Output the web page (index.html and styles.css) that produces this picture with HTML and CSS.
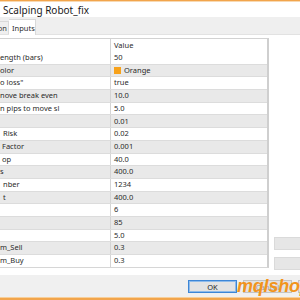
FILE: index.html
```html
<!DOCTYPE html>
<html>
<head>
<meta charset="utf-8">
<link rel="stylesheet" href="styles.css">
</head>
<body>
<div class="window">
  <div class="topline"></div>
  <div class="titlebar"><span class="title">Scalping Robot_fix</span></div>
  <div class="tabs">
    <div class="tab partial">on</div>
    <div class="tab active">Inputs</div>
  </div>
  <div class="page">
    <div class="grid">
      <div class="row head"><div class="c1"></div><div class="c2">Value</div></div>
      <div class="row"><div class="c1">ength (bars)</div><div class="c2">50</div></div>
      <div class="row"><div class="c1">olor</div><div class="c2"><span class="swatch"></span>Orange</div></div>
      <div class="row"><div class="c1">o loss"</div><div class="c2">true</div></div>
      <div class="row"><div class="c1">nove break even</div><div class="c2">10.0</div></div>
      <div class="row"><div class="c1">n pips to move sl</div><div class="c2">5.0</div></div>
      <div class="row"><div class="c1"></div><div class="c2">0.01</div></div>
      <div class="row"><div class="c1 ind">Risk</div><div class="c2">0.02</div></div>
      <div class="row"><div class="c1 ind1">Factor</div><div class="c2">0.001</div></div>
      <div class="row"><div class="c1 ind1">op</div><div class="c2">40.0</div></div>
      <div class="row"><div class="c1">s</div><div class="c2">400.0</div></div>
      <div class="row"><div class="c1 ind">nber</div><div class="c2">1234</div></div>
      <div class="row"><div class="c1 ind">t</div><div class="c2">400.0</div></div>
      <div class="row"><div class="c1"></div><div class="c2">6</div></div>
      <div class="row"><div class="c1"></div><div class="c2">85</div></div>
      <div class="row"><div class="c1"></div><div class="c2">5.0</div></div>
      <div class="row"><div class="c1">m_Sell</div><div class="c2">0.3</div></div>
      <div class="row"><div class="c1">m_Buy</div><div class="c2">0.3</div></div>
    </div>
    <div class="side">
      <div class="sbtn"></div>
      <div class="sbtn"></div>
    </div>
  </div>
  <div class="footer">
    <div class="btn ok">OK</div>
    <div class="btn cancel">Cancel</div>
    <div class="btn"></div>
    <div class="watermark">mqlshop</div>
  </div>
  <div class="bottomline"></div>
</div>
</body>
</html>
```

FILE: styles.css
```css
* { box-sizing: border-box; }
html, body { margin: 0; padding: 0; }
body {
  width: 300px;
  height: 300px;
  overflow: hidden;
  background: #fff;
  font-family: "Noto Sans", "Open Sans", sans-serif;
  color: #2a2a2a;
}
.window {
  width: 300px;
  height: 300px;
  display: flex;
  flex-direction: column;
  overflow: hidden;
}
.topline {
  height: 2px;
  flex: none;
  background: #f2a54c;
  border-bottom: 1px solid #f8d9b2;
}
.titlebar {
  height: 15px;
  flex: none;
  background: #fff;
  padding-left: 3px;
  display: flex;
  align-items: center;
}
.title {
  font-size: 10px;
  color: #1a1a1a;
  white-space: nowrap;
}
.tabs {
  height: 18px;
  flex: none;
  background: #efefef;
  display: flex;
  align-items: flex-end;
  border-bottom: 1px solid #e2e2e2;
}
.tab {
  font-size: 7.5px;
  display: flex;
  align-items: center;
  white-space: nowrap;
}
.tab.partial {
  width: 9px;
  height: 13px;
  justify-content: flex-end;
  overflow: hidden;
  border-right: 1px solid #d9d9d9;
  border-top: 1px solid #d9d9d9;
  padding-right: 1px;
  color: #333;
}
.tab.active {
  height: 16px;
  margin-bottom: -1px;
  width: 27px;
  padding-left: 3px;
  background: #fff;
  border: 1px solid #d9d9d9;
  border-bottom: none;
  border-left: none;
}
.page {
  flex: none;
  height: 240px;
  background: #fff;
  display: flex;
  padding-top: 3px;
  gap: 5px;
}
.grid {
  width: 269px;
  height: 230px;
  flex: none;
  border-top: 1px solid #d2d2d2;
  border-right: 2px solid #cfcfcf;
  border-bottom: 1px solid #d6d6d6;
  display: flex;
  flex-direction: column;
  overflow: hidden;
}
.row {
  height: 12.7px;
  flex: none;
  display: flex;
  font-size: 7.5px;
  line-height: 1;
  border-bottom: 1px solid #dcdcdc;
}
.row.head {
  height: 13px;
  border-bottom: none;
}
.row:nth-child(odd):not(.head) { background: #e9e9e9; }
.c1, .c2 {
  display: flex;
  align-items: center;
  white-space: nowrap;
  overflow: hidden;
}
.c1 {
  width: 111px;
  flex: none;
  border-right: 1px solid #d4d4d4;
}
.c1.ind { padding-left: 3px; }
.c1.ind1 { padding-left: 2px; }
.c2 {
  flex: 1;
  padding-left: 3px;
}
.swatch {
  width: 7px;
  height: 7px;
  background: #f7a21b;
  margin-right: 3px;
  flex: none;
}
.side {
  flex: 1;
  display: flex;
  flex-direction: column;
  justify-content: flex-end;
  gap: 7px;
  padding-bottom: 5px;
}
.sbtn {
  height: 13px;
  width: 40px;
  background: #e6e6e6;
  border: 1px solid #dadada;
}
.footer {
  flex: none;
  height: 22px;
  background: #f0f0f0;
  display: flex;
  padding: 5px 0 0 188px;
  gap: 6px;
  position: relative;
}
.btn {
  width: 49px;
  height: 13px;
  flex: none;
  background: #e3e3e3;
  border: 1px solid #c4c4c4;
  font-size: 7.5px;
  display: flex;
  align-items: center;
  justify-content: center;
  color: #222;
}
.btn.cancel { color: #9a9a9a; }
.btn.ok {
  border: 1px solid #3d86d6;
  box-shadow: inset 0 0 0 1px #8fbbea;
}
.watermark {
  position: absolute;
  left: 237px;
  top: 1px;
  font-family: "Liberation Sans", Arial, sans-serif;
  font-weight: bold;
  font-style: italic;
  font-size: 18px;
  line-height: 20px;
  color: #f2941c;
  white-space: nowrap;
  letter-spacing: -0.2px;
}
.bottomline {
  flex: none;
  height: 3px;
  background: #f2a54c;
  border-top: 1px solid #f7cf9a;
}
```
